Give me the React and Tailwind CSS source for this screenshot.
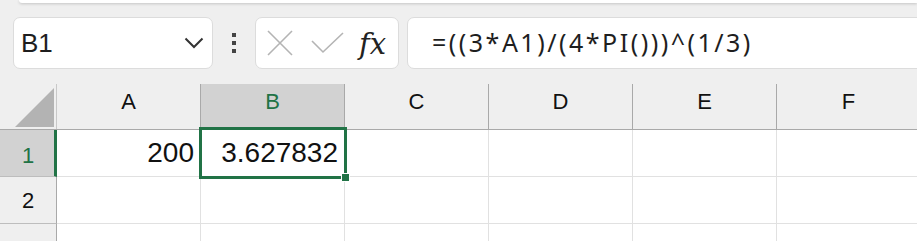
import React from "react";

const cols = ["A", "B", "C", "D", "E", "F"];

export default function App() {
  return (
    <div
      className="relative w-[917px] h-[241px] overflow-hidden bg-[#efefef]"
      style={{ fontFamily: '"Liberation Sans", Arial, sans-serif' }}
    >
      {/* ribbon bottom edge */}
      <div className="ml-[19px] h-[3px] bg-white rounded-bl-[8px] shadow-[0_1px_3px_rgba(0,0,0,0.18)]" />

      {/* formula bar */}
      <div className="mt-[14px] flex h-[52px] items-center pl-[13px]">
        <div className="flex h-[52px] w-[200px] shrink-0 items-center justify-between rounded-[7px] border border-[#dcdcdc] bg-white pl-[7px] pr-[8px]">
          <span className="text-[26px] text-[#1e1e1e]">B1</span>
          <svg width="20" height="12" viewBox="0 0 20 12" fill="none">
            <path d="M1.5 1.5 L10 10 L18.5 1.5" stroke="#333" strokeWidth="2" />
          </svg>
        </div>
        <div className="ml-[19px] flex w-[4px] shrink-0 flex-col gap-[4px]">
          <div className="h-[4px] w-[4px] bg-[#444]" />
          <div className="h-[4px] w-[4px] bg-[#444]" />
          <div className="h-[4px] w-[4px] bg-[#444]" />
        </div>
        <div className="ml-[19px] flex h-[52px] w-[144px] shrink-0 items-center rounded-[7px] border border-[#dcdcdc] bg-white pl-[11px]">
          <svg width="26" height="26" viewBox="0 0 26 26" fill="none">
            <path d="M1 1 L25 25 M25 1 L1 25" stroke="#b4b4b4" strokeWidth="1.6" />
          </svg>
          <svg className="ml-[18px]" width="33" height="22" viewBox="0 0 33 22" fill="none">
            <path d="M1 9 L12 20 L32 1" stroke="#b4b4b4" strokeWidth="1.6" />
          </svg>
          <span
            className="ml-[15px] mt-[2px] text-[29px] italic leading-none text-[#222]"
            style={{ fontFamily: '"DejaVu Serif", "Liberation Serif", serif' }}
          >
            fx
          </span>
        </div>
        <div className="ml-[8px] flex h-[52px] w-[560px] shrink-0 items-center rounded-l-[7px] border border-[#dcdcdc] bg-white pl-[24px]">
          <span className="text-[25px] tracking-[2.5px] text-[#1e1e1e]" style={{ fontFamily: '"Noto Sans", sans-serif' }}>
            =((3*A1)/(4*PI()))^(1/3)
          </span>
        </div>
      </div>

      {/* grid */}
      <div className="relative mt-[15px]">
        {/* header row */}
        <div className="flex h-[46px] border-b border-[#a9a9a9]">
          <div className="relative flex w-[57px] shrink-0 items-end justify-end border-r border-[#c8c8c8] pb-[2px] pr-[2px]">
            <svg width="39" height="39" viewBox="0 0 39 39">
              <path d="M39 0 L39 39 L0 39 Z" fill="#b3b3b3" />
            </svg>
          </div>
          {cols.map((c) => (
            <div
              key={c}
              className={
                c === "B"
                  ? "flex w-[144px] shrink-0 items-center justify-center border-r border-[#a9a9a9] bg-[#d2d2d2] pb-[11px] text-[22px] text-[#217346]"
                  : "flex w-[144px] shrink-0 items-center justify-center border-r border-[#a9a9a9] pb-[11px] text-[22px] text-[#111]"
              }
            >
              {c}
            </div>
          ))}
        </div>

        {/* row 1 */}
        <div className="flex h-[47px]">
          <div className="flex w-[57px] shrink-0 items-center justify-center border-r-[3px] border-b border-r-[#217346] border-b-[#bdbdbd] bg-[#d2d2d2] pt-[4px] pl-[2px] text-[22px] text-[#217346]">
            1
          </div>
          <div className="flex w-[144px] shrink-0 items-center justify-end border-r border-b border-[#e1e1e1] bg-white pr-[6px] text-[28px] text-[#111]">
            200
          </div>
          <div className="flex w-[144px] shrink-0 items-center justify-end border-r border-b border-[#e1e1e1] bg-white pr-[6px] text-[28px] text-[#111]">
            3.627832
          </div>
          {[0, 1, 2, 3].map((i) => (
            <div key={i} className="w-[144px] shrink-0 border-r border-b border-[#e1e1e1] bg-white" />
          ))}
        </div>

        {/* row 2 */}
        <div className="flex h-[47px]">
          <div className="flex w-[57px] shrink-0 items-center justify-center border-r border-b border-r-[#a9a9a9] border-b-[#bdbdbd] text-[22px] text-[#111]">
            2
          </div>
          {[0, 1, 2, 3, 4, 5].map((i) => (
            <div key={i} className="w-[144px] shrink-0 border-r border-b border-[#e1e1e1] bg-white" />
          ))}
        </div>

        {/* row 3 */}
        <div className="flex h-[47px]">
          <div className="flex w-[57px] shrink-0 items-start justify-center border-r border-r-[#a9a9a9] pt-[10px] text-[22px] text-[#111]">
            3
          </div>
          {[0, 1, 2, 3, 4, 5].map((i) => (
            <div key={i} className="w-[144px] shrink-0 border-r border-[#e1e1e1] bg-white" />
          ))}
        </div>

        {/* selection */}
        <div className="pointer-events-none absolute left-[199px] top-[43px] h-[52px] w-[148px] border-[3px] border-[#217346]" />
        <div className="pointer-events-none absolute left-[341px] top-[89px] h-[9px] w-[9px] border border-white bg-[#217346]" />
      </div>
    </div>
  );
}
